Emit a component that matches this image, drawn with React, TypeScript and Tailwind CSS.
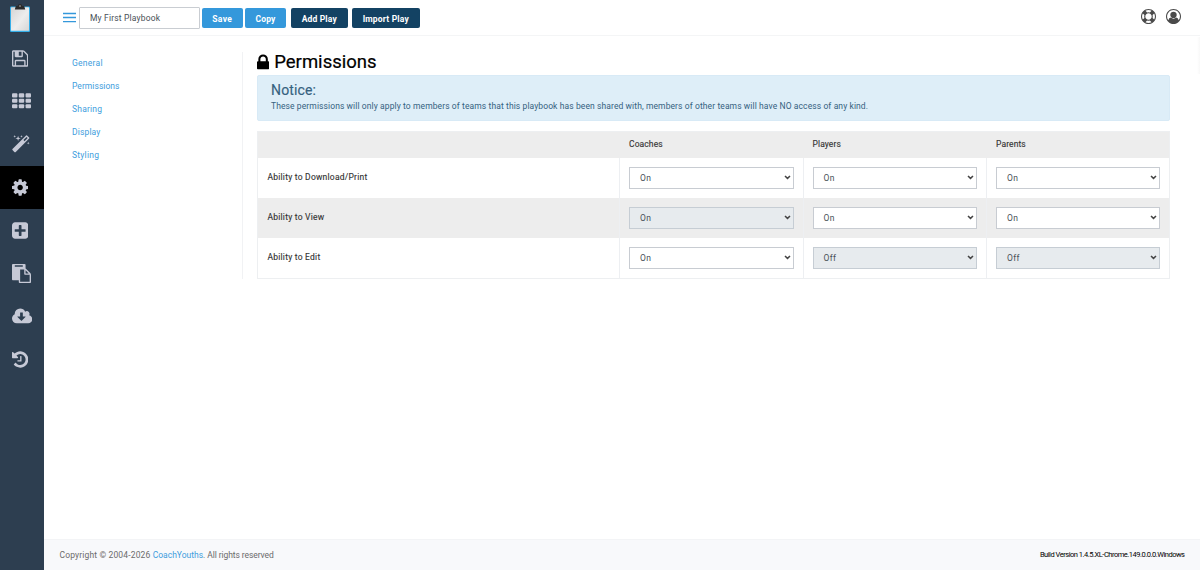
import type { ReactNode } from "react";

const icons = {
  save: "M512 1536h768v-384h-768v384zm896 0h128v-896q0-14-10-38.5t-20-34.5l-281-281q-10-10-34-20t-39-10v416q0 40-28 68t-68 28h-576q-40 0-68-28t-28-68v-416h-128v1280h128v-416q0-40 28-68t68-28h832q40 0 68 28t28 68v416zm-384-928v-320q0-13-9.5-22.5t-22.5-9.5h-192q-13 0-22.5 9.5t-9.5 22.5v320q0 13 9.5 22.5t22.5 9.5h192q13 0 22.5-9.5t9.5-22.5zm640 32v928q0 40-28 68t-68 28h-1344q-40 0-68-28t-28-68v-1344q0-40 28-68t68-28h928q40 0 88 20t76 48l280 280q28 28 48 76t20 88z",
  magic: "M1254 581l293-293-107-107-293 293zm447-293q0 27-18 45l-1286 1286q-18 18-45 18t-45-18l-198-198q-18-18-18-45t18-45l1286-1286q18-18 45-18t45 18l198 198q18 18 18 45zm-1351-190l98 30-98 30-30 98-30-98-98-30 98-30 30-98zm350 162l196 60-196 60-60 196-60-196-196-60 196-60 60-196zm930 478l98 30-98 30-30 98-30-98-98-30 98-30 30-98zm-640-640l98 30-98 30-30 98-30-98-98-30 98-30 30-98z",
  cog: "M1152 896q0-106-75-181t-181-75-181 75-75 181 75 181 181 75 181-75 75-181zm512-109v222q0 12-8 23t-20 13l-185 28q-19 54-39 91 35 50 107 138 10 12 10 25t-9 23q-27 37-99 108t-94 71q-12 0-26-9l-138-108q-44 23-91 38-16 136-29 186-7 28-36 28h-222q-14 0-24.5-8.5t-11.5-21.5l-28-184q-49-16-90-37l-141 107q-10 9-25 9-14 0-25-11-126-114-165-168-7-10-7-23 0-12 8-23 15-21 51-66.5t54-70.5q-27-50-41-99l-183-27q-13-2-21-12.5t-8-23.5v-222q0-12 8-23t19-13l186-28q14-46 39-92-40-57-107-138-10-12-10-24 0-10 9-23 26-36 98.5-107.5t94.5-71.5q13 0 26 10l138 107q44-23 91-38 16-136 29-186 7-28 36-28h222q14 0 24.5 8.5t11.5 21.5l28 184q49 16 90 37l142-107q9-9 24-9 13 0 25 10 129 119 165 170 7 8 7 22 0 12-8 23-15 21-51 66.5t-54 70.5q26 50 41 98l183 28q13 2 21 12.5t8 23.5z",
  plus: "M1408 960v-128q0-26-19-45t-45-19h-320v-320q0-26-19-45t-45-19h-128q-26 0-45 19t-19 45v320h-320q-26 0-45 19t-19 45v128q0 26 19 45t45 19h320v320q0 26 19 45t45 19h128q26 0 45-19t19-45v-320h320q26 0 45-19t19-45zm256-544v960q0 119-84.5 203.5t-203.5 84.5h-960q-119 0-203.5-84.5t-84.5-203.5v-960q0-119 84.5-203.5t203.5-84.5h960q119 0 203.5 84.5t84.5 203.5z",
  paste: "M768 1664h896v-640h-416q-40 0-68-28t-28-68v-416h-384v1152zm256-1440v-64q0-13-9.5-22.5t-22.5-9.5h-704q-13 0-22.5 9.5t-9.5 22.5v64q0 13 9.5 22.5t22.5 9.5h704q13 0 22.5-9.5t9.5-22.5zm256 672h299l-299-299v299zm512 128v672q0 40-28 68t-68 28h-960q-40 0-68-28t-28-68v-160h-544q-40 0-68-28t-28-68v-1344q0-40 28-68t68-28h1088q40 0 68 28t28 68v328q21 13 36 28l408 408q28 28 48 76t20 88z",
  cloud: "M1216 928q0-14-9-23t-23-9h-224v-352q0-13-9.5-22.5t-22.5-9.5h-192q-13 0-22.5 9.5t-9.5 22.5v352h-224q-13 0-22.5 9.5t-9.5 22.5q0 14 9 23l352 352q9 9 23 9t23-9l351-351q10-12 10-24zm640 224q0 159-112.5 271.5t-271.5 112.5h-1088q-185 0-316.5-131.5t-131.5-316.5q0-130 70-240t188-165q-2-30-2-43 0-212 150-362t362-150q156 0 285.5 87t188.5 231q71-62 166-62 106 0 181 75t75 181q0 76-41 138 130 31 213.5 135.5t83.5 238.5z",
  history: "M1664 896q0 156-61 298t-164 245-245 164-298 61q-172 0-327-72.5t-264-204.5q-7-10-6.5-22.5t8.5-20.5l137-138q10-9 25-9 16 2 23 12 73 95 179 147t225 52q104 0 198.5-40.5t163.5-109.5 109.5-163.5 40.5-198.5-40.5-198.5-109.5-163.5-163.5-109.5-198.5-40.5q-98 0-188 35.5t-160 101.5l137 138q31 30 14 69-17 40-59 40h-448q-26 0-45-19t-19-45v-448q0-42 40-59 39-17 69 14l130 129q107-101 244.5-156.5t284.5-55.5q156 0 298 61t245 164 164 245 61 298zm-640-288v448q0 14-9 23t-23 9h-320q-14 0-23-9t-9-23v-64q0-14 9-23t23-9h224v-352q0-14 9-23t23-9h64q14 0 23 9t9 23z",
  lock: "M640 768h512v-192q0-106-75-181t-181-75-181 75-75 181v192zm832 96v576q0 40-28 68t-68 28h-960q-40 0-68-28t-28-68v-576q0-40 28-68t68-28h32v-192q0-184 132-316t316-132 316 132 132 316v192h32q40 0 68 28t28 68z",
  ring: "M896 0q182 0 348 71t286 191 191 286 71 348-71 348-191 286-286 191-348 71-348-71-286-191-191-286-71-348 71-348 191-286 286-191 348-71zm0 128q-190 0-361 90l194 194q82-28 167-28t167 28l194-194q-171-90-361-90zm-678 1129l194-194q-28-82-28-167t28-167l-194-194q-90 171-90 361t90 361zm678 407q190 0 361-90l-194-194q-82 28-167 28t-167-28l-194 194q171 90 361 90zm0-384q159 0 271.5-112.5t112.5-271.5-112.5-271.5-271.5-112.5-271.5 112.5-112.5 271.5 112.5 271.5 271.5 112.5zm484-217l194 194q90-171 90-361t-90-361l-194 194q28 82 28 167t-28 167z",
  user: "M896 0q182 0 348 71t286 191 191 286 71 348q0 181-70.5 347t-190.5 286-286 191.5-349 71.5-349-71-285.5-191.5-190.5-286-71-347.5 71-348 191-286 286-191 348-71zm619 1351q149-205 149-455 0-156-61-298t-164-245-245-164-298-61-298 61-245 164-164 245-61 298q0 250 149 455 66-327 306-327 131 128 313 128t313-128q240 0 306 327zm-235-647q0-159-112.5-271.5t-271.5-112.5-271.5 112.5-112.5 271.5 112.5 271.5 271.5 112.5 271.5-112.5 112.5-271.5z",
};

function Glyph({ d, box, className }: { d: string; box: string; className: string }) {
  return (
    <svg viewBox={box} fill="currentColor" className={className}>
      <path d={d} />
    </svg>
  );
}

function GridIcon() {
  return (
    <svg viewBox="0 0 1792 1792" fill="currentColor" className="h-[19px] w-[19px]">
      {[128, 640, 1152].map((y) =>
        [0, 640, 1280].map((x) => <rect key={`${x}-${y}`} x={x} y={y} width="512" height="384" rx="96" />),
      )}
    </svg>
  );
}

function Clipboard() {
  return (
    <svg viewBox="0 0 22 30" className="h-[30px] w-[22px]">
      <defs>
        <linearGradient id="paper" x1="0" y1="0" x2="1" y2="1">
          <stop offset="0" stopColor="#d4d4d4" />
          <stop offset="0.55" stopColor="#ededed" />
          <stop offset="1" stopColor="#d6d6d6" />
        </linearGradient>
      </defs>
      <rect x="1" y="2.6" width="20" height="25.4" rx="1.2" fill="#35aee8" />
      <rect x="2" y="3.2" width="18" height="23.6" rx="0.5" fill="url(#paper)" />
      <path d="M6.8 2h2a2.2 2 0 0 1 4.4 0h2l1 3.4h-10.4z" fill="#2b2b2b" />
      <circle cx="11" cy="2.1" r="0.8" fill="#aaa" />
    </svg>
  );
}

function SideItem({ active, children }: { active?: boolean; children: ReactNode }) {
  return (
    <div className={active ? "flex h-[43.1px] items-center bg-black pl-3" : "flex h-[43.1px] items-center pl-3"}>
      {children}
    </div>
  );
}

function Select({ value, disabled }: { value: string; disabled?: boolean }) {
  return (
    <div
      className={
        disabled
          ? "flex h-[22.5px] items-center justify-between border border-[#c6cdd4] bg-[#e7ebee] pr-[2px] pl-[10px]"
          : "flex h-[22.5px] items-center justify-between border border-[#c8ccd2] bg-white pr-[2px] pl-[10px]"
      }
    >
      <span className="text-[8.5px] tracking-[0.3px] text-[#495057]">{value}</span>
      <svg viewBox="0 0 7 5" fill="none" className="h-[5px] w-[7px]">
        <path d="M1 1 L3.5 3.4 L6 1" stroke="#444" strokeWidth="1.5" />
      </svg>
    </div>
  );
}

const links = [
  { label: "General", cls: "tracking-[0.27px]" },
  { label: "Permissions", cls: "tracking-[0.05px]" },
  { label: "Sharing", cls: "tracking-[0.21px]" },
  { label: "Display", cls: "tracking-[0.15px]" },
  { label: "Styling", cls: "tracking-[0.25px]" },
];

const rows = [
  { label: "Ability to Download/Print", cells: ["On", "On", "On"], off: [false, false, false] },
  { label: "Ability to View", cells: ["On", "On", "On"], off: [true, false, false] },
  { label: "Ability to Edit", cells: ["On", "Off", "Off"], off: [false, true, true] },
];

const button = "flex h-5 items-center justify-center rounded-[2px] pt-[1.5px] text-[8.5px] font-bold text-white";

export default function App() {
  return (
    <div className="flex h-[570px] w-[1200px] overflow-hidden bg-white font-['Roboto',sans-serif] text-[8.5px] leading-[12px] text-[#495057]">
      <aside className="flex w-[43.5px] shrink-0 flex-col bg-[#2d3e50] text-[#c6c9d6]">
        <div className="flex h-[36.5px] shrink-0 items-start pt-[4px] pl-[9px]">
          <Clipboard />
        </div>
        <SideItem><Glyph d={icons.save} box="128 0 1536 1792" className="h-[19px] w-[16.3px]" /></SideItem>
        <SideItem><GridIcon /></SideItem>
        <SideItem><Glyph d={icons.magic} box="64 0 1664 1792" className="h-[19px] w-[17.6px]" /></SideItem>
        <SideItem active><Glyph d={icons.cog} box="128 0 1536 1792" className="h-[19px] w-[16.3px]" /></SideItem>
        <SideItem><Glyph d={icons.plus} box="128 0 1536 1792" className="h-[19px] w-[16.3px]" /></SideItem>
        <SideItem><Glyph d={icons.paste} box="0 0 1792 1792" className="h-[19px] w-[19px]" /></SideItem>
        <SideItem><Glyph d={icons.cloud} box="-64 0 1920 1792" className="h-[19px] w-[20.3px]" /></SideItem>
        <SideItem><Glyph d={icons.history} box="128 0 1536 1792" className="h-[19px] w-[16.3px]" /></SideItem>
      </aside>

      <div className="flex min-w-0 flex-1 flex-col">
        <header className="flex h-[36px] shrink-0 items-center border-b border-[#f4f5f6] pt-px pl-[19.5px]">
          <svg viewBox="0 0 13 11" className="mb-[1px] h-[11px] w-[13px]" stroke="#3498db" strokeWidth="1.3">
            <path d="M0 1.5h13M0 5.5h13M0 9.6h13" />
          </svg>
          <div className="ml-[3px] flex h-[22px] w-[121px] items-center rounded-[1px] border border-[#c9cdd2] pl-[10px] tracking-[0.17px]">
            My First Playbook
          </div>
          <div className={`${button} ml-[2px] w-[40.5px] bg-[#3498db] tracking-[0.4px]`}>Save</div>
          <div className={`${button} ml-[2.5px] w-[41px] bg-[#3498db] tracking-[0.21px]`}>Copy</div>
          <div className={`${button} ml-[5px] w-[56.5px] bg-[#134263] tracking-[0.16px]`}>Add Play</div>
          <div className={`${button} ml-[4.5px] w-[67.5px] bg-[#134263] tracking-[0.18px]`}>Import Play</div>
          <div className="mr-[19.5px] mb-[4px] ml-auto flex gap-[10px] text-[#4a4a4a]">
            <Glyph d={icons.ring} box="0 0 1792 1792" className="h-[15px] w-[15px]" />
            <Glyph d={icons.user} box="0 0 1792 1792" className="h-[15px] w-[15px]" />
          </div>
        </header>

        <main className="flex flex-1 items-start pt-4">
          <nav className="flex h-[227px] w-[199.5px] shrink-0 flex-col gap-[11.1px] border-r border-[#f1f2f4] pt-[5px] pl-[28.5px] text-[#3e9ddd]">
            {links.map((l) => (
              <span key={l.label} className={l.cls}>{l.label}</span>
            ))}
          </nav>
          <section className="ml-[14px] w-[912.5px] shrink-0">
            <h1 className="flex h-[23px] items-center text-[18.5px] tracking-[0.02px] text-black [-webkit-text-stroke:0.2px_black]">
              <Glyph d={icons.lock} box="320 0 1152 1792" className="mr-[5px] mb-[3px] h-[19px] w-[12.2px]" />
              <span className="mt-[-3px]">Permissions</span>
            </h1>
            <div className="h-[46px] rounded-[2px] border border-[#d8eaf6] bg-[#deeef8] pt-[6px] pl-[13px] text-[#35617f]">
              <div className="text-[14px] leading-[17px] tracking-[0.15px] [-webkit-text-stroke:0.15px_#35617f]">Notice:</div>
              <p className="mt-[1px] tracking-[0.1px]">
                These permissions will only apply to members of teams that this playbook has been shared with, members of other teams will have NO access of any kind.
              </p>
            </div>
            <div className="mt-[10px] border border-[#edeff1] text-[#333]">
              <div className="grid h-[26px] grid-cols-[361px_183.5px_183.5px_1fr] bg-[#ededed] pt-[6px] tracking-[0.1px] [-webkit-text-stroke:0.12px_#333]">
                <span />
                <span className="pl-[10px]">Coaches</span>
                <span className="pl-[10px]">Players</span>
                <span className="pl-[10px]">Parents</span>
              </div>
              {rows.map((r, i) => (
                <div
                  key={r.label}
                  className={
                    i === 1
                      ? "grid h-10 grid-cols-[361px_183.5px_183.5px_1fr] bg-[#ededed]"
                      : "grid h-10 grid-cols-[361px_183.5px_183.5px_1fr]"
                  }
                >
                  <span className="pt-[13px] pl-[9.5px] tracking-[0.23px] [-webkit-text-stroke:0.12px_#333]">{r.label}</span>
                  {r.cells.map((c, j) => (
                    <div key={j} className="border-l border-[#edeff2] px-[9px] pt-[8.5px]">
                      <Select value={c} disabled={r.off[j]} />
                    </div>
                  ))}
                </div>
              ))}
            </div>
          </section>
          <div className="mt-[-15px] ml-auto h-[37px] w-[3px] bg-gradient-to-r from-white to-[#f8f8f8]" />
        </main>

        <footer className="flex h-[31px] shrink-0 items-center justify-between border-t border-[#f3f4f6] bg-[#f8f9fb] pr-[15.5px] pl-4 text-[#6b6b6b]">
          <span className="flex">
            <span className="tracking-[0.15px] whitespace-pre">Copyright © 2004-2026 </span>
            <span className="text-[#3e9ddd]">CoachYouths</span>
            <span className="tracking-[-0.08px] whitespace-pre">. All rights reserved</span>
          </span>
          <span className="text-[7.5px] tracking-[-0.48px] text-black">Build Version 1.4.5.XL-Chrome.149.0.0.0.Windows</span>
        </footer>
      </div>
    </div>
  );
}
